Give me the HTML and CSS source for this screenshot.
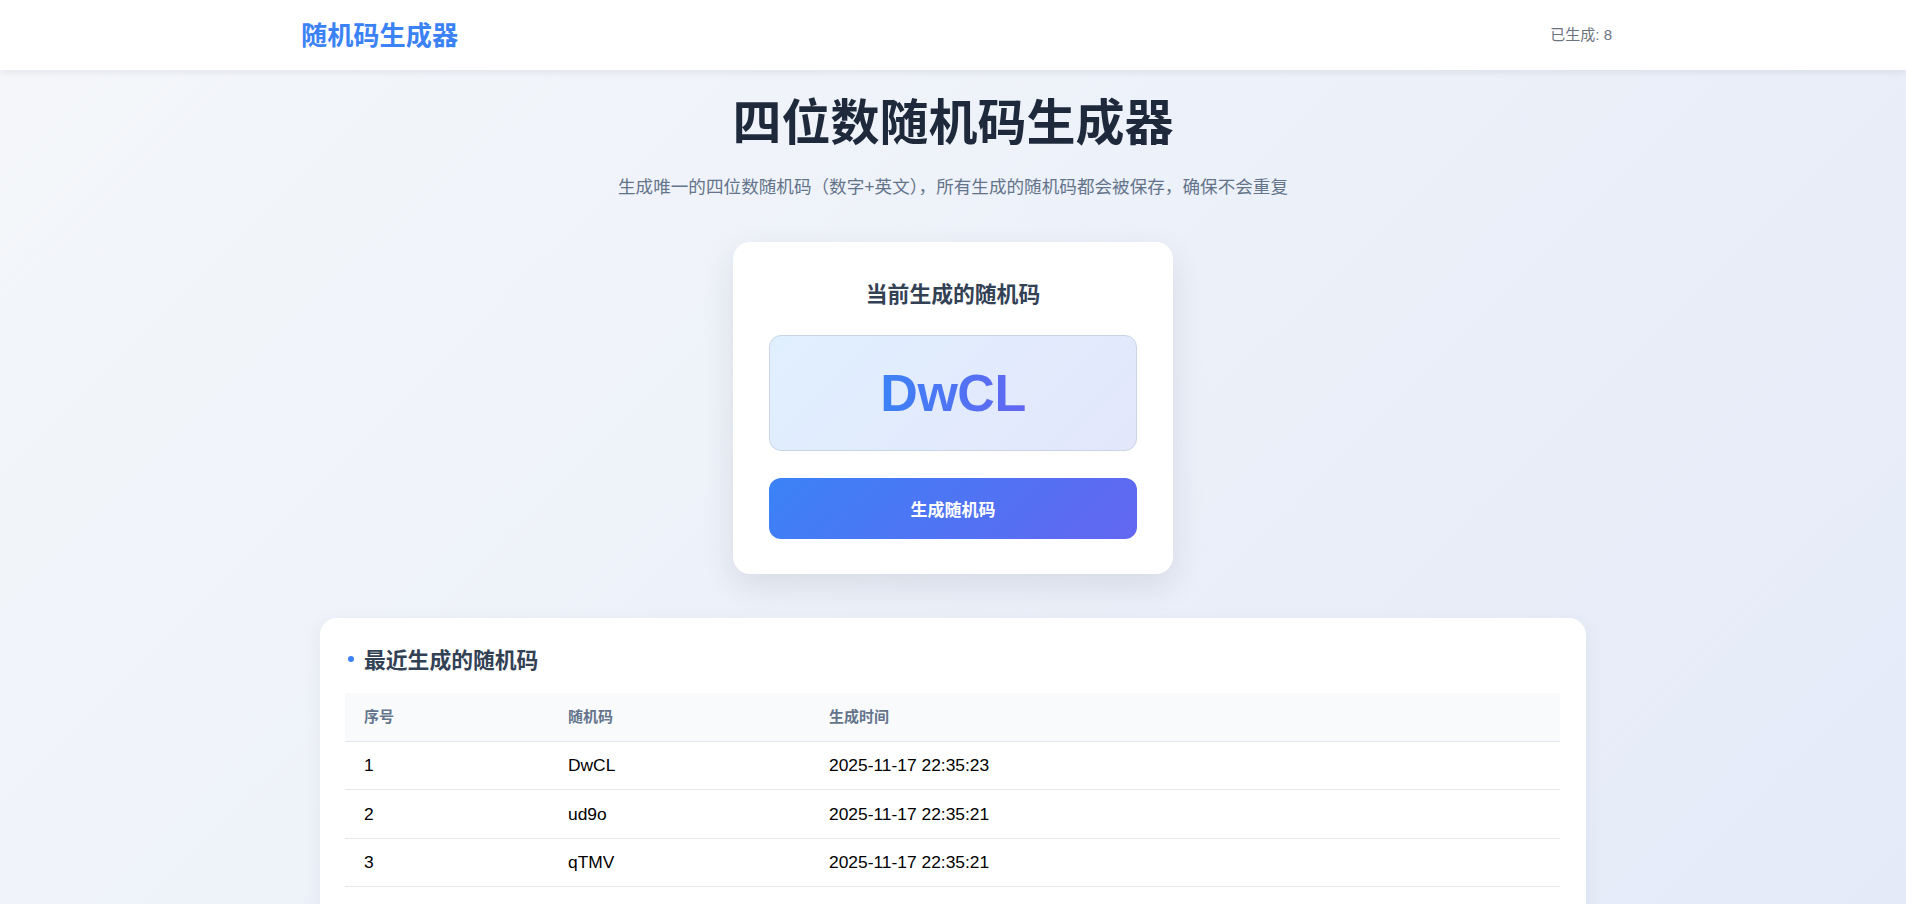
FILE: index.html
```html
<!DOCTYPE html>
<html lang="zh-CN">
<head>
<meta charset="UTF-8">
<title>四位数随机码生成器</title>
<link rel="stylesheet" href="styles.css">
</head>
<body>
<header class="nav">
  <div class="nav-inner">
    <div class="logo">随机码生成器</div>
    <div class="count">已生成: 8</div>
  </div>
</header>
<main class="main">
  <h1 class="title">四位数随机码生成器</h1>
  <p class="subtitle">生成唯一的四位数随机码（数字+英文），所有生成的随机码都会被保存，确保不会重复</p>

  <section class="gen-card">
    <h2 class="gen-title">当前生成的随机码</h2>
    <div class="code-box"><span class="code">DwCL</span></div>
    <button class="gen-btn">生成随机码</button>
  </section>

  <section class="list-card">
    <h2 class="list-title">最近生成的随机码</h2>
    <table class="table">
      <colgroup>
        <col class="col-idx">
        <col class="col-code">
        <col>
      </colgroup>
      <thead>
        <tr><th>序号</th><th>随机码</th><th>生成时间</th></tr>
      </thead>
      <tbody>
        <tr><td>1</td><td>DwCL</td><td>2025-11-17 22:35:23</td></tr>
        <tr><td>2</td><td>ud9o</td><td>2025-11-17 22:35:21</td></tr>
        <tr><td>3</td><td>qTMV</td><td>2025-11-17 22:35:21</td></tr>
        <tr><td>4</td><td>K7pX</td><td>2025-11-17 22:35:20</td></tr>
        <tr><td>5</td><td>3fRb</td><td>2025-11-17 22:35:19</td></tr>
        <tr><td>6</td><td>Yq2n</td><td>2025-11-17 22:35:18</td></tr>
        <tr><td>7</td><td>hE8s</td><td>2025-11-17 22:35:16</td></tr>
        <tr><td>8</td><td>Zm4T</td><td>2025-11-17 22:35:14</td></tr>
      </tbody>
    </table>
  </section>
</main>
</body>
</html>
```

FILE: styles.css
```css
* { box-sizing: border-box; }

html, body { margin: 0; padding: 0; }

body {
  font-family: "Liberation Sans", "Noto Sans CJK SC", sans-serif;
  background: linear-gradient(135deg, #f5f7fa 0%, #e4eaf8 100%) fixed;
  min-height: 100vh;
  color: #1e293b;
}

.nav {
  height: 70px;
  background: #ffffff;
  box-shadow: 0 2px 8px rgba(15, 23, 42, 0.08);
  display: flex;
  align-items: center;
}

.nav-inner {
  width: 1311px;
  margin-left: calc(50% - 652px);
  display: flex;
  justify-content: space-between;
  align-items: center;
}

.logo {
  font-size: 26.2px;
  line-height: 34px;
  font-weight: 700;
  color: #3b82f6;
  padding-top: 2px;
}

.count {
  font-size: 15px;
  line-height: 20px;
  color: #6b7280;
}

.main {
  display: flex;
  flex-direction: column;
  align-items: center;
  padding: 24px 0 40px;
}

.title {
  margin: 0;
  font-size: 49px;
  line-height: 59px;
  font-weight: 700;
  color: #1e293b;
}

.subtitle {
  margin: 21px 0 0;
  font-size: 17.6px;
  line-height: 26px;
  color: #64748b;
}

.gen-card {
  margin-top: 42px;
  width: 440px;
  background: #ffffff;
  border-radius: 17px;
  padding: 36px 36px 35.5px;
  box-shadow: 0 12px 32px rgba(30, 41, 59, 0.10);
  display: flex;
  flex-direction: column;
  align-items: stretch;
}

.gen-title {
  margin: 0;
  text-align: center;
  font-size: 21.8px;
  line-height: 33px;
  font-weight: 700;
  color: #334155;
}

.code-box {
  margin-top: 24px;
  height: 116px;
  border: 1px solid #c9d5e6;
  border-radius: 12px;
  background: linear-gradient(135deg, #e0effe 0%, #e3e7fb 100%);
  display: flex;
  align-items: center;
  justify-content: center;
}

.code {
  font-size: 52px;
  line-height: 60px;
  font-weight: 700;
  letter-spacing: -0.5px;
  background: linear-gradient(90deg, #3b82f6 0%, #6366f1 100%);
  -webkit-background-clip: text;
  background-clip: text;
  color: transparent;
}

.gen-btn {
  margin-top: 27px;
  height: 60.5px;
  border: none;
  border-radius: 12px;
  background: linear-gradient(135deg, #3b82f6 0%, #6366f1 100%);
  color: #ffffff;
  font-family: inherit;
  font-size: 17px;
  font-weight: 700;
  cursor: pointer;
}

.list-card {
  margin-top: 44.3px;
  width: 1266px;
  background: #ffffff;
  border-radius: 17px;
  padding: 25px 26px 25px 25px;
  box-shadow: 0 4px 20px rgba(30, 41, 59, 0.05);
}

.list-title {
  margin: 0 0 14px;
  display: flex;
  align-items: center;
  gap: 10px;
  font-size: 21.8px;
  line-height: 36px;
  font-weight: 700;
  color: #334155;
}

.list-title::before {
  content: "";
  width: 6px;
  height: 6px;
  border-radius: 50%;
  background: #3b82f6;
  margin-left: 3px;
  margin-top: -4px;
}

.table {
  width: 100%;
  border-collapse: collapse;
}

.col-idx { width: 204px; }
.col-code { width: 261px; }

.table th {
  background: #f8fafc;
  text-align: left;
  font-size: 15px;
  font-weight: 700;
  color: #64748b;
  line-height: 20px;
  padding: 13.7px 19px;
  border-bottom: 1px solid #e2e8f0;
}

.table td {
  text-align: left;
  font-size: 17.4px;
  line-height: 20px;
  color: #000000;
  padding: 13.75px 19px;
  border-bottom: 1px solid #e5e7eb;
}
```
